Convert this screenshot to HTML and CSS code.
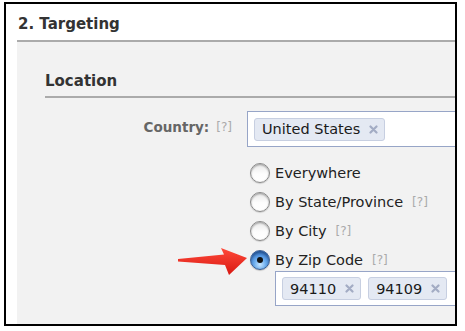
FILE: index.html
```html
<!DOCTYPE html>
<html lang="en">

<head>
  <meta charset="UTF-8">
  <meta name="viewport" content="width=device-width, initial-scale=1.0">
  <title>Targeting - Location</title>
  <link rel="stylesheet" href="styles.css">
</head>

<body>
  <div class="frame">
    <div class="section">
      <h2 class="sectionTitle">2. Targeting</h2>

      <div class="sectionBody">
        <h3 class="groupTitle">Location</h3>

        <div class="formRow">
          <div class="formLabel">
            <span class="labelText">Country:</span>
            <span class="help">[?]</span>
          </div>

          <div class="formField">
            <div class="tokenInput">
              <span class="token">United States
                <svg class="tokenClose" width="9" height="9" viewBox="0 0 9 9"><path d="M1.5 1.5 L7.5 7.5 M7.5 1.5 L1.5 7.5" /></svg>
              </span>
            </div>

            <ul class="options">
              <li class="option"><span class="radio"></span>Everywhere</li>
              <li class="option"><span class="radio"></span>By State/Province <span class="help">[?]</span></li>
              <li class="option"><span class="radio"></span>By City <span class="help">[?]</span></li>
              <li class="option"><span class="radio checked"></span>By Zip Code <span class="help">[?]</span></li>
            </ul>

            <div class="tokenInput zipInput">
              <span class="token">94110
                <svg class="tokenClose" width="9" height="9" viewBox="0 0 9 9"><path d="M1.5 1.5 L7.5 7.5 M7.5 1.5 L1.5 7.5" /></svg>
              </span>
              <span class="token">94109
                <svg class="tokenClose" width="9" height="9" viewBox="0 0 9 9"><path d="M1.5 1.5 L7.5 7.5 M7.5 1.5 L1.5 7.5" /></svg>
              </span>
            </div>
          </div>
        </div>
      </div>
    </div>

    <!-- callout arrow pointing at the zip code option -->
    <svg class="arrow" width="74" height="34" viewBox="0 0 74 34">
      <defs>
        <linearGradient id="arrowFill" x1="0" y1="0" x2="0" y2="1">
          <stop offset="0" stop-color="#ff4a3a" />
          <stop offset="1" stop-color="#d81812" />
        </linearGradient>
      </defs>
      <polygon points="2,13 48,8.5 45,2 71,12 53,29 49,19 2,15.5" fill="url(#arrowFill)" />
    </svg>
  </div>
</body>

</html>
```

FILE: styles.css
```css
body {
  margin: 0;
  padding: 0;
  background-color: #fff;
  font-family: 'DejaVu Sans', 'Liberation Sans', sans-serif;
  color: #222;
}

.frame {
  position: relative;
  display: flex;
  flex-direction: column;
  box-sizing: border-box;
  width: 453px;
  height: 324px;
  margin: 2px 0 0 4px;
  border: 2px solid #000;
  background-color: #fff;
  overflow: hidden;
}

.section {
  flex: 1;
  display: flex;
  flex-direction: column;
  margin-left: 11px;
}

.sectionTitle {
  margin: 0;
  height: 25px;
  padding: 11px 0 0 1px;
  border-bottom: 2px solid #ababab;
  font-size: 15px;
  line-height: 18px;
  font-weight: bold;
  color: #333;
}

.sectionBody {
  flex: 1;
  padding-left: 28px;
  background-color: #f2f2f2;
}

.groupTitle {
  margin: 0;
  padding: 30px 0 6px 0;
  border-bottom: 2px solid #ababab;
  font-size: 15px;
  line-height: 18px;
  font-weight: bold;
  color: #333;
}

.formRow {
  display: flex;
  margin-top: 13px;
}

.formLabel {
  display: flex;
  justify-content: flex-end;
  align-items: center;
  flex: none;
  width: 187px;
  height: 32px;
  margin-right: 15px;
}

.labelText {
  font-size: 13.5px;
  font-weight: bold;
  color: #666;
}

.help {
  margin-left: 7px;
  font-size: 12px;
  color: #aaa;
}

.formField {
  flex: none;
  width: 300px;
}

.tokenInput {
  display: flex;
  align-items: center;
  gap: 7px;
  box-sizing: border-box;
  height: 36px;
  padding: 0 6px;
  border: 1px solid #97a5c7;
  background-color: #fff;
}

.zipInput {
  height: 35px;
  margin: -3px 0 0 28px;
}

.token {
  display: inline-flex;
  align-items: center;
  box-sizing: border-box;
  height: 23px;
  padding: 0 6px 0 7px;
  border: 1px solid #c7cfe1;
  border-radius: 3px;
  background-color: #e4e9f3;
  font-size: 14.5px;
  color: #1a1a1a;
}

.tokenClose {
  margin-left: 9px;
  stroke: #a3acc4;
  stroke-width: 2.2;
  stroke-linecap: round;
}

.options {
  list-style: none;
  margin: 11px 0 0 3px;
  padding: 0;
}

.option {
  display: flex;
  align-items: center;
  height: 29px;
  font-size: 14.5px;
  color: #222;
}

.option .help {
  margin-left: 9px;
}

.radio {
  position: relative;
  flex: none;
  box-sizing: border-box;
  width: 20px;
  height: 20px;
  margin-right: 5px;
  border: 1px solid #8a8a8a;
  border-radius: 50%;
  background: linear-gradient(#e9e9e9, #fdfdfd 55%, #ffffff);
  box-shadow: inset 0 1px 2px rgba(0, 0, 0, 0.35), 0 1px 1px rgba(0, 0, 0, 0.15);
}

.radio.checked {
  border-color: #3c5f93;
  background: radial-gradient(circle at 50% 75%, #c8e6ff 0, #6fb0f0 35%, #3a7dd4 75%, #2a5fae 100%);
  box-shadow: inset 0 2px 3px rgba(0, 0, 0, 0.35), 0 1px 1px rgba(0, 0, 0, 0.2);
}

.radio.checked::after {
  content: '';
  position: absolute;
  left: 6px;
  top: 6px;
  width: 6px;
  height: 6px;
  border-radius: 50%;
  background-color: #111;
}

.arrow {
  position: absolute;
  left: 170px;
  top: 242px;
}
```
